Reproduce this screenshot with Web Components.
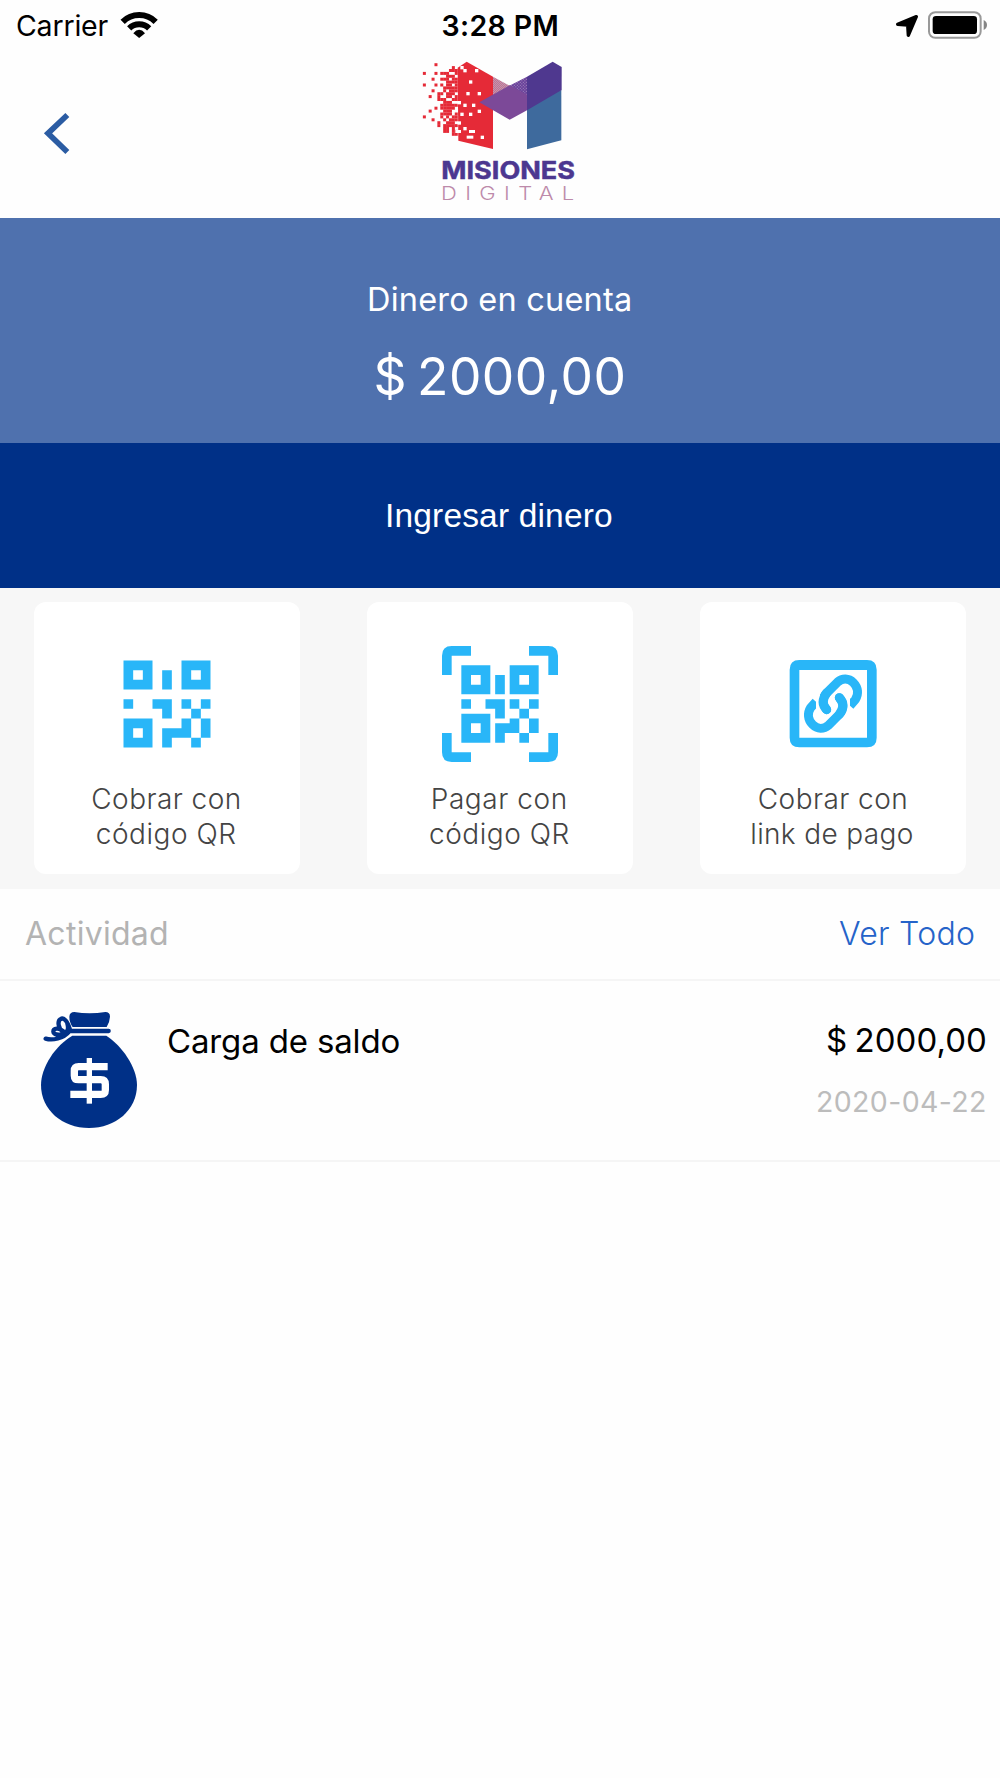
<!DOCTYPE html>
<html lang="es">
<head>
<meta charset="utf-8">
<title>Misiones Digital</title>
<style>
html,body{margin:0;padding:0}
body{width:1000px;height:1778px;overflow:hidden;background:#fefefe;font-family:Inter,"Liberation Sans",sans-serif;color:#000}
</style>
</head>
<body>
<wallet-app></wallet-app>
<script>
const define=(name,html,Base=HTMLElement)=>customElements.define(name,class extends Base{
  constructor(){super();this.attachShadow({mode:'open'}).innerHTML=html;}
});

/* A single line of text tracked so that its inked width equals the "ink" attribute;
   "gap" adjusts the width of its word spaces. */
customElements.define('fit-text',class extends HTMLElement{
  constructor(){
    super();
    this.attachShadow({mode:'open'}).innerHTML='<style>:host{display:block;white-space:nowrap}span{display:block}</style><span><slot></slot></span>';
  }
  connectedCallback(){
    const cs=getComputedStyle(this),ctx=document.createElement('canvas').getContext('2d');
    ctx.font=`${cs.fontWeight} ${cs.fontSize} ${cs.fontFamily}`;
    const t=this.textContent,m=ctx.measureText(t),ink=+this.getAttribute('ink'),gap=+(this.getAttribute('gap')||0);
    const spaces=t.split(' ').length-1;
    const ls=(ink-gap*spaces-m.actualBoundingBoxLeft-m.actualBoundingBoxRight)/(t.length-1);
    this.style.width=ink+'px';
    const s=this.shadowRoot.querySelector('span');
    s.style.letterSpacing=ls+'px';
    s.style.wordSpacing=gap+'px';
    s.style.marginLeft=m.actualBoundingBoxLeft+'px';
  }
});

define('status-bar',`<style>
:host{display:grid;grid-template-columns:1fr auto 1fr;align-items:center;height:50px;line-height:51px;font-size:28.5px}
.l,.r{display:flex;align-items:center}
.l{padding-left:17px;gap:11px}
.r{justify-content:flex-end;padding-right:13.500px;gap:10px}
.t{font-weight:600}
svg{display:block}
</style>
<div class="l"><fit-text ink="91.5">Carrier</fit-text>
<svg width="38" height="50" viewBox="358 0 114 150" fill="none" stroke="#000">
<path d="M366 62.500A70 70 0 0 1 465 62.500" stroke-width="18"/>
<path d="M385.500 82A43 43 0 0 1 445.500 82" stroke-width="18"/>
<path d="M415.500 111L398 96.500Q415.500 76 433 96.500Z" fill="#000" stroke="none"/></svg></div>
<fit-text class="t" ink="115">3:28 PM</fit-text>
<div class="r">
<svg width="22" height="50" viewBox="108 0 66 150"><path d="M113 70L169 47L145 103L143 72Z" stroke="#000" stroke-width="10" stroke-linejoin="round"/></svg>
<svg width="59" height="50" viewBox="204 0 177 150"><rect x="207" y="33.500" width="155" height="77" rx="19" fill="none" stroke="#999" stroke-width="6"/><rect x="218" y="45" width="133" height="54" rx="10"/><path d="M371 57Q381 62 381 72T371 87Z" fill="#858585"/></svg>
</div>`);

/* Dissolving left edge of the logo: one string per row, one digit per cell. */
const bits=['00001','00000000001','000000000111','100010111001','000000001110','000100111011','000000001111','100010101101','000000011111','000100010111','000001101110','001001001101','000001110011','000000011100','000000111111','000010111110','001000011100','000000111101','100000101011','000100010111','000001001110','000001011111','000000011010','000000011011','000000000011'];
const pixels=bits.map((r,j)=>[...r].map((b,k)=>b==='1'?`<rect x="${(14.6+8.7*k).toFixed(1)}" y="${(21.6+8.7*j).toFixed(1)}" width="9" height="9"/>`:'').join('')).join('');
const holes=[[141,44],[176,44],[132,35],[158,78],[150,113],[184,113],[141,148],[167,148],[158,175],[132,175],[184,166],[141,218],[124,140],[124,201],[193,244]].map(([x,y])=>`<rect x="${x-5}" y="${y-5}" width="10" height="10"/>`).join('');

define('brand-logo',`<style>:host{display:block}svg{display:block}text{font-family:Inter,sans-serif}</style>
<svg width="180" height="165" viewBox="0 0 540 495">
<defs>
<pattern id="d" width="6" height="6" patternUnits="userSpaceOnUse"><rect width="6" height="6" fill="#cb6f8b"/><rect width="3" height="3" fill="#b79bb6"/><rect x="3" y="3" width="3" height="3" fill="#b79bb6"/></pattern>
<pattern id="e" width="9" height="9" patternUnits="userSpaceOnUse"><rect width="9" height="9" fill="#69409a"/><rect x="1" y="1" width="3" height="3" fill="#a68dbd"/><rect x="5.500" y="5.500" width="3" height="3" fill="#a68dbd"/></pattern>
</defs>
<g transform="translate(24 18)"><g fill="#e52a37"><path d="M119 35L146 17L225 62V279L121 254Z"/>${pixels}</g>
<g fill="#fff">${holes}<rect x="146" y="239" width="20" height="9"/><rect x="112" y="222" width="17" height="9"/><rect x="153" y="222" width="18" height="9"/></g></g>
<path d="M249 80L299 107L249 136Z" fill="url(#d)"/>
<path d="M351 138L454 120V271L351 298Z" fill="#3e6a9d"/>
<path d="M351 80L428 35L455 51V120L351 181Z" fill="#4f388f"/>
<path d="M295 109L351 80V138Z" fill="url(#e)"/>
<path d="M208 157L299 106L351 134V181L299 209Z" fill="#7c4998"/>
<text x="94" y="386" font-size="74" font-weight="700" fill="#4c3790" stroke="#4c3790" stroke-width="1.500" textLength="401" lengthAdjust="spacingAndGlyphs">MISIONES</text>
<g transform="translate(93 449) scale(1.2 1)"><text font-size="55" font-weight="300" fill="#bd8aaa" textLength="333">DIGITAL</text></g>
</svg>`);

define('nav-header',`<style>
:host{display:grid;grid-template-columns:1fr 180px 1fr;height:167.500px}
.b{padding:60px 0 0 42px}svg{display:block}
</style><div class="b"><svg width="30" height="46" viewBox="126 330 90 138" fill="none" stroke="#2b5ca3" stroke-width="17"><path d="M202 345L144 400L202 456"/></svg></div><brand-logo></brand-logo>`);

define('balance-panel',`<style>
:host{display:flex;flex-direction:column;align-items:center;box-sizing:border-box;height:225.500px;padding:61px 1px 0 0;background:#4f71ae;color:#fff}
.a{font-size:32.500px;line-height:42px;font-weight:400}
.b{font-size:51.500px;line-height:60px;margin-top:25px;font-weight:400}
</style><fit-text class="a" ink="261">Dinero en cuenta</fit-text><fit-text class="b" ink="248" gap="-5">$ 2000,00</fit-text>`);

define('deposit-button',`<style>
:host{display:flex;justify-content:center;align-items:center;height:145px;background:#003087;color:#fff;font:33.500px/40px "Liberation Sans",sans-serif}
</style><fit-text ink="224">Ingresar dinero</fit-text>`);

define('action-card',`<style>
:host{display:flex;flex-direction:column;align-items:center;box-sizing:border-box;width:266px;height:272px;padding-top:44px;border-radius:12px;background:#fff;color:#444;font-size:28px;line-height:35px;font-weight:300}
.l{margin:19.500px 1px 0 0;display:flex;flex-direction:column;align-items:center}
</style><slot name="icon"></slot><div class="l"><slot></slot></div>`);

const svgIcon=(vb,body)=>`<style>:host{display:block;width:116px;height:116px}svg{display:block}</style><svg width="116" height="116" viewBox="${vb}" fill="#29b6f8">${body}</svg>`;
define('icon-qr',svgIcon('-1.500 -1.500 12 12',`<path fill-rule="evenodd" d="M0 0h3v3h-3zM1 1v1h1v-1zM6 0h3v3h-3zM7 1v1h1v-1zM0 6h3v3h-3zM1 7v1h1v-1z"/><path d="M4 1h1v2h-1zM0 4h1v1h-1zM3 4h2v2h-1v-1h-1zM6 4h1v1h-1zM8 4h1v1h-1zM7 5h1v1h-1zM8 6h1v2h-1zM7 8h1v1h-1zM6 6h1v2h-2v1h-1v-2h2z"/>`));
define('icon-scan',svgIcon('0 0 12 12',`<path d="M0 3V1Q0 0 1 0H3V1H1V3zM9 0H11Q12 0 12 1V3H11V1H9zM0 9V11Q0 12 1 12H3V11H1V9zM12 9V11Q12 12 11 12H9V11H11V9z"/><path fill-rule="evenodd" d="M2 2h3v3h-3zM3 3v1h1v-1zM7 2h3v3h-3zM8 3v1h1v-1zM2 7h3v3h-3zM3 8v1h1v-1z"/><path d="M5.500 3h1v2h-1zM2 5.500h1v1h-1zM4.500 5.500h2v2h-1v-1h-1zM7 5.500h1v1h-1zM9 5.500h1v1h-1zM8 6.500h1v1h-1zM9 7.500h1v1.500h-1zM8 9h1v1h-1zM7 7.500h1v1.500h-1.500v1h-1v-2h1.500z"/>`));
const loop='<path d="M441 359C427 343 427 323 441 309L474 276C488 264 507 264 521 278C536 293 537 313 527 329L511 347" fill="none" stroke="#29b6f8" stroke-width="27"/><circle cx="441" cy="359" r="13.500"/><path d="M496 312H511V367H499Z" fill="#fff"/>';
define('icon-link',svgIcon('286 168 348 348',`<path fill-rule="evenodd" d="M359 210H562Q591 210 591 239V443Q591 472 562 472H359Q330 472 330 443V239Q330 210 359 210ZM359 240V443H562V240Z"/>${loop}<g transform="rotate(180 460 341)">${loop}</g><path d="M479 323Q500 344 479 373M441 359Q420 338 441 309" fill="none" stroke="#29b6f8" stroke-width="27" stroke-linecap="round"/>`));

define('action-row',`<style>:host{display:flex;justify-content:space-between;box-sizing:border-box;height:301px;padding:14px 34px 0 33.500px;background:#f7f7f7}</style>
<action-card><icon-qr slot="icon"></icon-qr><fit-text ink="147.500">Cobrar con</fit-text><fit-text ink="138.500">código QR</fit-text></action-card>
<action-card><icon-scan slot="icon"></icon-scan><fit-text ink="133">Pagar con</fit-text><fit-text ink="138.500">código QR</fit-text></action-card>
<action-card><icon-link slot="icon"></icon-link><fit-text ink="147.500">Cobrar con</fit-text><fit-text ink="160.500">link de pago</fit-text></action-card>`);

define('activity-header',`<style>:host{display:flex;justify-content:space-between;align-items:center;box-sizing:border-box;height:91.500px;padding:1px 26px 0 25px;border-bottom:2px solid #f5f5f5;font-size:32px;line-height:40px;font-weight:400;color:#b3b3b3}.v{color:#2563c9;font-weight:300}</style>
<fit-text ink="142">Actividad</fit-text><fit-text class="v" ink="135">Ver Todo</fit-text>`);

define('icon-bag',`<style>:host{display:block}svg{display:block}</style><svg width="96" height="116" viewBox="123 366 288 348" fill="#003087">
<path d="M208 380Q209 366 223 366Q268 374 316 366Q330 366 330 380Q329 397 320 411H218Q208 397 208 380Z"/>
<path d="M217 437H319C365 466 411 532 411 585C411 660 347 714 267 714S123 660 123 585C123 532 166 466 217 437Z"/>
<path d="M326 423H211C202 389 191 384 184 386C170 391 175 417 189 425C202 432 207 417 202 400M190 424C177 412 160 414 160 425C160 438 190 436 208 424C190 446 157 452 137 446" fill="none" stroke="#003087" stroke-width="13" stroke-linecap="round" stroke-linejoin="round"/>
<path d="M323 530H236Q223 530 223 543V557Q223 569 236 569H302Q316 569 316 583V600Q316 613 302 613H211" fill="none" stroke="#fff" stroke-width="22"/>
<path d="M260 504H276V641H260Z" fill="#fff"/>
</svg>`);

define('activity-item',`<style>:host{display:flex;align-items:flex-start;box-sizing:border-box;height:181px;padding:31.500px 15px 0 41px;border-bottom:2px solid #f5f5f5;font-size:33px;line-height:40px}
.n{margin:8.500px 0 0 31px}.r{margin:8px 0 0 auto;display:flex;flex-direction:column;align-items:flex-end}.d{font-size:28.500px;margin-top:22px;color:#bcbcbc;font-weight:400}</style>
<icon-bag></icon-bag><fit-text class="n" ink="231.500">Carga de saldo</fit-text><div class="r"><fit-text ink="158" gap="-2">$ 2000,00</fit-text><fit-text class="d" ink="167">2020-04-22</fit-text></div>`);

define('wallet-app',`<style>:host{display:flex;flex-direction:column;width:1000px}</style>
<status-bar></status-bar><nav-header></nav-header><balance-panel></balance-panel><deposit-button></deposit-button><action-row></action-row><activity-header></activity-header><activity-item></activity-item>`);
</script>
</body>
</html>
